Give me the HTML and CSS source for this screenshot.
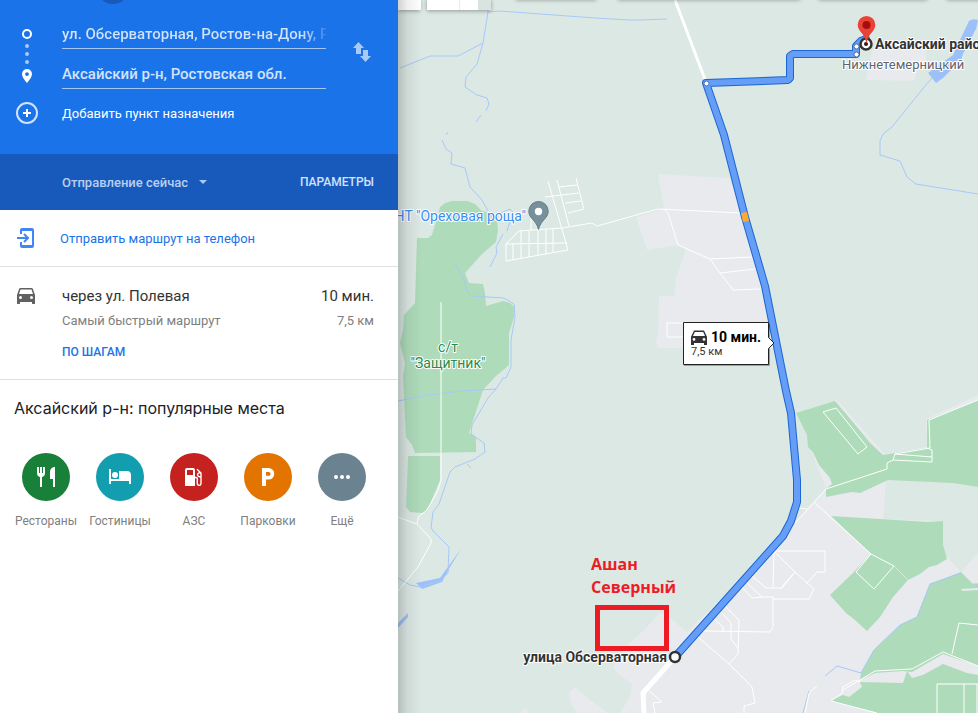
FILE: index.html
```html
<!DOCTYPE html>
<html lang="ru">
<head>
    <meta charset="UTF-8">
    <meta name="viewport" content="width=device-width, initial-scale=1.0">
    <title>Маршрут: ул. Обсерваторная – Аксайский р-н</title>
    <link rel="stylesheet" href="styles.css">
</head>
<body>
    <div class="app">
        <aside class="panel">
            <!-- Waypoints -->
            <form class="directions">
                <span class="mode-active"></span>
                <div class="waypoints">
                    <svg class="waypoint-icons" width="22" height="82" viewBox="0 0 22 82" aria-hidden="true">
                        <circle cx="11" cy="14" r="4" fill="none" stroke="#fff" stroke-width="2"/>
                        <g fill="#a9c9f8">
                            <circle cx="11" cy="26" r="2"/>
                            <circle cx="11" cy="34" r="2"/>
                            <circle cx="11" cy="42" r="2"/>
                        </g>
                        <path fill="#fff" fill-rule="evenodd" d="M11 49a5 5 0 0 0-5 5c0 3.500 5 9 5 9s5-5.500 5-9a5 5 0 0 0-5-5zm0 3.200a1.900 1.900 0 1 1 0 3.800 1.900 1.900 0 0 1 0-3.800z"/>
                    </svg>
                    <div class="waypoint-fields">
                        <input class="waypoint waypoint-long" type="text" aria-label="Пункт отправления" value="ул. Обсерваторная, Ростов-на-Дону, Ростовская обл.">
                        <input class="waypoint" type="text" aria-label="Пункт назначения" value="Аксайский р-н, Ростовская обл.">
                    </div>
                    <button class="swap" type="button" aria-label="Поменять местами">
                        <svg width="18" height="20" viewBox="0 0 18 20"><path fill="#a9c9f8" d="M5.500 0 0 6h3v6h5V6h3zM10 8v6H7l5.500 6L18 14h-3V8z"/></svg>
                    </button>
                </div>
                <button class="add-stop" type="button">
                    <svg width="22" height="22" viewBox="0 0 22 22" aria-hidden="true">
                        <circle cx="11" cy="11" r="10" fill="none" stroke="#d2e3fc" stroke-width="2"/>
                        <path stroke="#fff" stroke-width="2" d="M11 7v8M7 11h8"/>
                    </svg>
                    <span>Добавить пункт назначения</span>
                </button>
            </form>

            <div class="options-bar">
                <div class="departure">
                    <select aria-label="Время отправления">
                        <option>Отправление сейчас</option>
                    </select>
                    <svg width="8" height="4" viewBox="0 0 8 4" aria-hidden="true"><path fill="#a9c9f8" d="M0 0h8L4 4z"/></svg>
                </div>
                <button class="options" type="button">ПАРАМЕТРЫ</button>
            </div>

            <a class="send" href="#send">
                <svg width="18" height="20" viewBox="0 0 18 20" aria-hidden="true">
                    <path fill="#4285f4" d="M5 0h10a2 2 0 0 1 2 2v16a2 2 0 0 1-2 2H5a2 2 0 0 1-2-2v-4h2v3h10V3H5v3H3V2a2 2 0 0 1 2-2z"/>
                    <path fill="none" stroke="#4285f4" stroke-width="2" d="M0 10h10M7 6l4 4-4 4"/>
                </svg>
                <span>Отправить маршрут на телефон</span>
            </a>

            <!-- Suggested route -->
            <section class="route">
                <svg class="route-icon" width="18" height="16" viewBox="0 0 18 16" aria-hidden="true">
                    <path fill="#616161" fill-rule="evenodd" d="M15.900 1C15.700.400 15.200 0 14.500 0h-11C2.800 0 2.300.400 2.100 1L0 7v8.500c0 .300.200.500.500.500h2c.300 0 .500-.200.500-.500V14h12v1.500c0 .300.200.500.500.500h2c.300 0 .500-.200.500-.500V7zM3.500 11a1.500 1.500 0 1 1 0-3 1.500 1.500 0 0 1 0 3zm11 0a1.500 1.500 0 1 1 0-3 1.500 1.500 0 0 1 0 3zM2 6l1.500-4.500h11L16 6z"/>
                </svg>
                <div class="route-body">
                    <div class="route-line route-main"><span>через ул. Полевая</span><span>10 мин.</span></div>
                    <div class="route-line route-sub"><span>Самый быстрый маршрут</span><span>7,5 км</span></div>
                    <button class="steps" type="button">ПО ШАГАМ</button>
                </div>
            </section>

            <!-- Nearby places -->
            <section class="places">
                <h2>Аксайский р-н: популярные места</h2>
                <div class="place-list">
                    <a class="place" href="#restaurants">
                        <span class="place-icon green">
                            <svg width="20" height="20" viewBox="0 0 20 20"><path fill="#fff" d="M1 0h2v6h1V0h2v6h1V0h2v6c0 2.300-1.200 3.700-3 4v10H4V10c-1.800-.300-3-1.700-3-4zM19 0v20h-2v-8h-3V5c0-2.700 2-5 5-5z"/></svg>
                        </span>
                        Рестораны
                    </a>
                    <a class="place" href="#hotels">
                        <span class="place-icon teal">
                            <svg width="22" height="16" viewBox="0 0 22 16"><path fill="#fff" d="M0 0h2v10h8V2h8c2.500 0 4 1.500 4 4v9h-2v-3H2v3H0z"/><circle cx="6" cy="6" r="3" fill="#fff"/></svg>
                        </span>
                        Гостиницы
                    </a>
                    <a class="place" href="#fuel">
                        <span class="place-icon red">
                            <svg width="18" height="18" viewBox="0 0 18 18">
                                <path fill="#fff" fill-rule="evenodd" d="M2 0h6a2 2 0 0 1 2 2v16H0V2a2 2 0 0 1 2-2zm0 2v5h6V2z"/>
                                <path fill="none" stroke="#fff" stroke-width="1.400" d="M10 9.500h1c1 0 1.300.500 1.300 1.500v4.500a1.800 1.800 0 0 0 3.700 0V5L12 1.300M15.500 8.500a2 2 0 1 1 0-3.500"/>
                            </svg>
                        </span>
                        АЗС
                    </a>
                    <a class="place" href="#parking">
                        <span class="place-icon orange">
                            <svg width="14" height="18" viewBox="0 0 14 18"><path fill="#fff" fill-rule="evenodd" d="M1 0h6.500a5.800 5.800 0 0 1 0 11.600H5V18H1zm4 4v3.800h2.700a1.900 1.900 0 0 0 0-3.800z"/></svg>
                        </span>
                        Парковки
                    </a>
                    <a class="place" href="#more">
                        <span class="place-icon slate">
                            <svg width="16" height="4" viewBox="0 0 16 4" fill="#fff"><circle cx="2" cy="2" r="2"/><circle cx="8" cy="2" r="2"/><circle cx="14" cy="2" r="2"/></svg>
                        </span>
                        Ещё
                    </a>
                </div>
            </section>
        </aside>

        <main class="map">
            <svg class="map-canvas" viewBox="398 0 580 713" preserveAspectRatio="xMinYMin slice">
                <defs>
                    <linearGradient id="edge">
                        <stop offset="0" stop-opacity=".18"/>
                        <stop offset=".4" stop-opacity=".06"/>
                        <stop offset="1" stop-opacity="0"/>
                    </linearGradient>
                    <filter id="soft" x="-10%" y="-50%" width="120%" height="200%"><feGaussianBlur stdDeviation="2"/></filter>
                </defs>

                <!-- built-up areas -->
                <g class="urban">
                    <path d="M658 174 729 178 745 215 765 290 776 348H658L656 343 658 333 659 296H674L676 278 686 249 677 245 647 250 636 217 664 209z"/>
                    <path d="M660 613 667 615 687 632 783 538 795 523 826 488 818 468 811 449 816 450 832 478 886 481 883 519 943 521 943 552 961 572 978 553V713H620L630 697 632 684 617 673 613 667 628 645 647 627z"/>
                    <path d="M575 687 569 693 571 703 577 713H608L590 700zM526 708 520 713H528zM872 50H926V69L919 66 914 81 866 80z"/>
                    <path d="M835 401 836 399 885 454 927 447 926 419 978 395V402L930 421V450L883 457z"/>
                </g>

                <!-- parks -->
                <g class="park">
                    <path d="M440 207 445 203 452 201H467L475 204 482 211 492 213 497 220 498 230 496 242 482 254 465 273 469 283 483 284 485 293 486 306 503 301 510 303 514 307V317L509 333V365L495 377 483 390 469 433 476 437V452L415 453 412 445 406 437 403 377 405 363 400 343 403 330 404 315 415 303 417 238H428L432 235 438 215z"/>
                    <path d="M408 456H440V480L427 511 422 513 410 512 406 507z"/>
                    <path d="M796 413 835 401 846 414 857 427 870 443 883 455 927 448V420L978 400V487L953 483 888 480 860 493 852 492 826 497V489L832 484 830 478 819 465 813 452 808 447 807 435z"/>
                    <path d="M831 516 928 522 943 521V545L947 559 937 565 929 567 920 574 908 580 893 597 880 617 867 631 855 620 846 613 830 595 853 573 871 554z"/>
                    <path d="M930 584 961 572 973 584H978V588L961 589 963 591 978 590V666L943 654 912 672 903 671 875 673 860 680 861 673 874 650 900 625 917 617z"/>
                    <path d="M860 682 903 683 907 671 912 678 923 675 943 664 967 673 978 675V713H877L830 701 843 695 849 697 862 687z"/>
                </g>

                <!-- water -->
                <g class="lake">
                    <path d="M416 583 440 578 461 549 450 567 442 582 422 589zM398 623 408 613V617L398 628z"/>
                    <path d="M969 21Q973 18 978 20L976 29 963 54 961 60 943 78 936 83 928 73 953 55z"/>
                </g>
                <g class="river">
                    <path d="M488 0V12L483 43 477 64 466 77 465 87 477 95 487 98 489 104 486 111M481 115 476 122M448 132 446 135M442 140 446 149 452 153 451 164 465 168 470 187 482 200 488 211"/>
                    <path d="M483 43 458 56H430L400 68M488 12 500 11 595 18 630 20H640L667 19M498 214 510 209 513 212 507 231M503 234 496 247 497 253 490 267"/>
                    <path d="M455 264 464 280 467 292 471 296 504 298 514 304 515 317 511 340V367L506 378H503L496 389 488 398 472 425 471 434 484 443 485 452 475 459 455 467 450 472 439 504 433 512 431 528 434 532 449 547 448 573 440 581 420 587 410 585 398 578M496 389 462 391 428 395 398 401M467 464 471 468"/>
                    <path d="M932 78 925 86 892 127 883 134 880 141V155L900 161 907 177 916 184 978 194"/>
                    <path d="M825 676 837 666 861 673 874 650 900 625 917 617 930 584 961 573M973 584H978M809 691 803 713"/>
                </g>

                <!-- streets -->
                <g class="street">
                    <path d="M441 302V480L438 490 431 503 426 511 419 516 417 524M398 517 417 524 431 539V543L418 567 398 591"/>
                    <path d="M548 181 568 250M557 180 569 226M576 178 584 209 568 213M545 197 579 193M559 187 577 185M565 203 581 201"/>
                    <path d="M506 244 519 231 562 228 592 223 597 226 658 209 740 213M506 244V261L568 250M506 244 567 243M513 244V259M521 231V258M529 231V257M538 230V255M546 229V254M553 229V252M531 218V230"/>
                    <path d="M664 209 668 213 678 245 710 259 720 273 734 291M710 259 752 257M720 273 755 269M734 290 761 289M690 323H667V337H690"/>
                    <path d="M795 523 826 489 887 469V463L893 460 895 454 930 448 929 420 978 400M893 460 932 462V450L927 448M895 454 932 457M823 412 836 408 867 447 858 454z"/>
                    <path d="M815 503 871 554 894 566 874 589 856 572 871 554M800 508 807 509M774 551H825V572H817L807 583M774 551 795 572 807 583 814 589 809 599H773M774 551 773 588M795 572 782 588H766L752 576M795 572 780 589"/>
                    <path d="M746 582 762 597H773V627L770 632 703 631M740 585 752 598 762 597M726 607 739 620 738 654 729 664M721 612 731 623V639L738 648M713 618 723 627V631M698 637 729 664 752 687 755 703 744 706V713M648 690 662 702 653 703 655 713"/>
                    <path d="M843 690 860 680 875 671 912 669 943 652 978 666M952 654 959 623 978 625M937 713V684H978M964 684V713M977 684V713M877 713 831 701 842 693 843 687 855 680 860 682M817 686 809 693 805 713"/>
                </g>
                <path class="thin-street" d="M894 566 908 580"/>
                <path class="highway" d="M675 0 706 82"/>
                <path class="highway highway-wide" d="M675 657 643 693 644 713"/>

                <!-- route: outline, then the fill over it -->
                <path class="route-path route-outline" d="M866 39 861 41 856 46V54H793L790 56V78L788 80 706 83 724 135 745 217 765 286 786 391 791 413 797 480V502L791 521 783 536 675 657"/>
                <path class="route-path route-fill" d="M866 39 861 41 856 46V54H793L790 56V78L788 80 706 83 724 135 745 217 765 286 786 391 791 413 797 480V502L791 521 783 536 675 657"/>
                <path fill="#ffa833" d="M741 213 747 212 749 221 743 222z"/>
                <g fill="#fff" stroke="#4a6fae">
                    <circle cx="706.500" cy="83.500" r="2.500"/>
                    <circle cx="856.500" cy="46.500" r="2.500"/>
                    <circle cx="856.500" cy="54.500" r="2.500"/>
                </g>

                <!-- place labels -->
                <g class="label">
                    <text class="poi" x="526" y="221" text-anchor="end">НТ "Ореховая роща"</text>
                    <text class="park-name" x="448" y="352" text-anchor="middle">с/т</text>
                    <text class="park-name" x="448" y="368" text-anchor="middle">"Защитник"</text>
                    <text class="locality" x="842" y="69">Нижнетемерницкий</text>
                    <text class="endpoint" x="875" y="49">Аксайский район</text>
                    <text class="endpoint" x="667" y="662" text-anchor="end">улица Обсерваторная</text>
                </g>

                <path fill="#78909c" stroke="#607d8b" d="M538.500 201.500a9.700 9.700 0 0 0-9.700 9.700c0 7.300 7.700 9 9.700 18.300 2-9.300 9.700-11 9.700-18.300a9.700 9.700 0 0 0-9.700-9.700z"/>
                <circle cx="538.500" cy="211.500" r="3.700" fill="#fff"/>

                <circle cx="866" cy="44" r="5.500" fill="#fff" stroke="#333" stroke-width="2.500"/>
                <circle cx="866" cy="44" r="2" fill="#222"/>
                <path fill="#ea4335" d="M866.500 16a8.800 8.800 0 0 0-8.800 8.800c0 7 7.800 9 8.500 18.200h.600c.700-9.200 8.500-11.200 8.500-18.200a8.800 8.800 0 0 0-8.800-8.800z"/>
                <circle cx="866.500" cy="25" r="4" fill="#a50e0e"/>
                <circle cx="675" cy="657" r="5" fill="#fff" stroke="#333" stroke-width="2.500"/>

                <!-- route time callout -->
                <path class="callout-shadow" d="M684 324H770V366H684z"/>
                <path class="callout" d="M683.500 322.500H768.500V337.500L774 343 768.500 348.500V364.500H683.500z"/>
                <path fill="#333" fill-rule="evenodd" d="M694 330.500h10l2.600 5.500c.300.300.400.700.400 1.200V345h-3v-2h-10v2h-3v-7.800c0-.500.100-.900.400-1.200zm.800 1.500-1.800 4h12l-1.800-4zM694 338a1.400 1.400 0 1 0 0 2.800 1.400 1.400 0 0 0 0-2.800zm10 0a1.400 1.400 0 1 0 0 2.800 1.400 1.400 0 0 0 0-2.800z"/>
                <text class="callout-time" x="711" y="342">10 мин.</text>
                <text class="callout-distance" x="691" y="355">7,5 км</text>

                <!-- hand-made mark -->
                <text class="mark-text" x="591" y="570">Ашан</text>
                <text class="mark-text" x="591" y="593">Северный</text>
                <path fill="none" stroke="#ed1c24" stroke-width="5" d="M597.500 607.500h69v41h-69z"/>

                <!-- bottoms of the search and filter cards -->
                <g filter="url(#soft)" opacity=".35">
                    <path d="M398 0h22v11h-22zM427 0h64v11h-64zM516-8h80v8h-80zM618-8h182v8H618zM819-8h108v8H819zM947-8h40v8h-40z"/>
                </g>
                <path fill="#fff" d="M398 0h23v10h-23zM427 0h51v10h-51z"/>
                <path fill="#d9e3e0" d="M478 0h13v10h-13z"/>
                <path stroke="#e8eaed" d="M459.500 0v10"/>
                <path fill="url(#edge)" d="M398 0h24v713h-24z"/>
            </svg>
        </main>
    </div>
</body>
</html>
```
FILE: styles.css
```css
:root {
    --blue: #1a73e8;
    --dark-blue: #185abc;
    --line: #e0e0e0;
}

* {
    box-sizing: border-box;
}

body {
    margin: 0;
    font-family: Roboto, "Liberation Sans", sans-serif;
    font-size: 13px;
    color: #333;
}

button, input, select {
    font: inherit;
    color: inherit;
    background: none;
    border: 0;
    padding: 0;
    margin: 0;
}

button {
    cursor: pointer;
}

a {
    text-decoration: none;
}

svg {
    display: block;
}

.app {
    display: flex;
    min-height: 100vh;
}

.panel {
    flex: 0 0 398px;
    background: #fff;
}

/* Directions form */
.directions {
    position: relative;
    overflow: hidden;
    padding: 20px 24px 30px 16px;
    background: var(--blue);
    color: #fff;
}

.mode-active {
    position: absolute;
    top: -30px;
    left: 96px;
    width: 34px;
    height: 34px;
    border-radius: 50%;
    background: var(--dark-blue);
}

.waypoints {
    display: flex;
}

.waypoint-icons {
    flex: none;
    margin-right: 24px;
}

.waypoint-fields {
    flex: 1;
    display: flex;
    flex-direction: column;
    gap: 11px;
}

.waypoint {
    width: 100%;
    height: 29px;
    border-bottom: 1px solid #a3c7f6;
    font-size: 15px;
    font-weight: 500;
    color: #d2e3fc;
    outline: 0;
}

.waypoint-long {
    color: transparent;
    background: linear-gradient(to right, #d2e3fc 240px, transparent 268px);
    background-clip: text;
    -webkit-background-clip: text;
}

.swap {
    align-self: flex-start;
    margin: 22px 3px 0 27px;
}

.add-stop {
    display: flex;
    align-items: center;
    gap: 24px;
    height: 22px;
}

/* Departure time */
.options-bar {
    display: flex;
    justify-content: space-between;
    align-items: center;
    height: 56px;
    padding: 0 24px 0 62px;
    background: var(--dark-blue);
    color: #d2e3fc;
}

.departure {
    display: flex;
    align-items: center;
    gap: 10px;
    font-weight: 500;
    color: #b9cff0;
}

.departure select {
    appearance: none;
}

.options {
    font-size: 12px;
    font-weight: 500;
}

.send {
    display: flex;
    align-items: center;
    gap: 25px;
    height: 57px;
    padding: 0 17px;
    border-bottom: 1px solid var(--line);
    color: var(--blue);
}

/* Route */
.route {
    display: flex;
    gap: 27px;
    padding: 19px 24px 18px 17px;
    border-bottom: 1px solid var(--line);
}

.route-icon {
    flex: none;
    margin-top: 2px;
}

.route-body {
    flex: 1;
}

.route-line {
    display: flex;
    justify-content: space-between;
}

.route-main {
    font-size: 15px;
    line-height: 20px;
}

.route-sub {
    margin-top: 5px;
    line-height: 20px;
    color: #808080;
}

.steps {
    display: block;
    margin-top: 12px;
    height: 18px;
    font-size: 12px;
    font-weight: 500;
    color: var(--blue);
}

/* Places */
.places {
    padding: 18px 9px;
}

.places h2 {
    margin: 0 5px 35px;
    font-family: Inter, Roboto, sans-serif;
    font-size: 16px;
    line-height: 20px;
    font-weight: 400;
    color: #202124;
}

.place-list {
    display: flex;
}

.place {
    display: flex;
    flex-direction: column;
    align-items: center;
    gap: 12px;
    width: 74px;
    font-size: 12px;
    line-height: 16px;
    color: #808080;
}

.place-icon {
    display: flex;
    align-items: center;
    justify-content: center;
    width: 48px;
    height: 48px;
    border-radius: 50%;
}

.green {
    background: #188038;
}

.teal {
    background: #129eaf;
}

.red {
    background: #c5221f;
}

.orange {
    background: #e37400;
}

.slate {
    background: #6b8391;
}

/* Map */
.map {
    position: relative;
    flex: 1;
    min-width: 0;
    overflow: hidden;
    background: #dce8e4;
}

.map-canvas {
    position: absolute;
    width: 100%;
    height: 100%;
}

.urban {
    fill: #e8eaed;
}

.park {
    fill: #aedbba;
}

.lake {
    fill: #9cc0f9;
}

.river {
    fill: none;
    stroke: #a8c8f8;
}

.street {
    fill: none;
    stroke: #fff;
}

.thin-street {
    stroke: #d5e8dc;
}

.highway {
    fill: none;
    stroke: #fff;
    stroke-width: 3px;
}

.highway-wide {
    stroke-width: 5px;
}

.route-path {
    fill: none;
    stroke-linejoin: round;
    stroke-linecap: round;
}

.route-outline {
    stroke: #1967d2;
    stroke-width: 8px;
}

.route-fill {
    stroke: #669df6;
    stroke-width: 6px;
}

.label text {
    paint-order: stroke;
    stroke: #fff;
    stroke-width: 2px;
    stroke-linejoin: round;
}

.label .poi {
    font-size: 14px;
    fill: #3c8df0;
}

.label .park-name {
    font-size: 14px;
    fill: #2a8a4a;
}

.label .locality {
    font-size: 13px;
    fill: #5f6470;
}

.label .endpoint {
    font-size: 14px;
    font-weight: 700;
    fill: #333;
}

.callout {
    fill: #fff;
    stroke: #222;
}

.callout-shadow {
    fill: #000;
    opacity: .3;
}

.callout-time {
    font-size: 14px;
    font-weight: 700;
    fill: #000;
}

.callout-distance {
    font-size: 11px;
    fill: #333;
}

.mark-text {
    font-family: "Open Sans", "Noto Sans", sans-serif;
    font-size: 16px;
    font-weight: 700;
    fill: #ed1c24;
}
```
